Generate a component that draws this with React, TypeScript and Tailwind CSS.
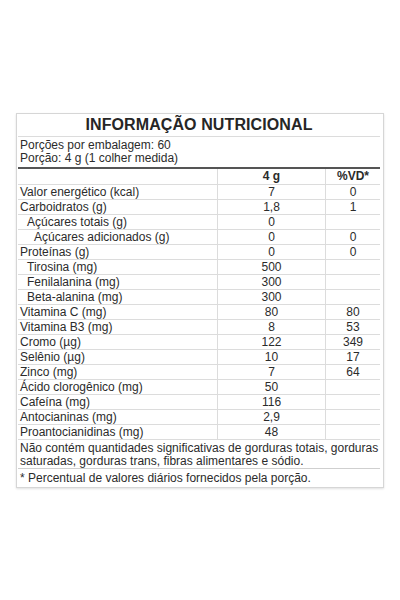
const rows: { label: string; indent?: number; qty: string; vd?: string }[] = [
  { label: 'Valor energético (kcal)', qty: '7', vd: '0' },
  { label: 'Carboidratos (g)', qty: '1,8', vd: '1' },
  { label: 'Açúcares totais (g)', indent: 1, qty: '0' },
  { label: 'Açúcares adicionados (g)', indent: 2, qty: '0', vd: '0' },
  { label: 'Proteínas (g)', qty: '0', vd: '0' },
  { label: 'Tirosina (mg)', indent: 1, qty: '500' },
  { label: 'Fenilalanina (mg)', indent: 1, qty: '300' },
  { label: 'Beta-alanina (mg)', indent: 1, qty: '300' },
  { label: 'Vitamina C (mg)', qty: '80', vd: '80' },
  { label: 'Vitamina B3 (mg)', qty: '8', vd: '53' },
  { label: 'Cromo (µg)', qty: '122', vd: '349' },
  { label: 'Selênio (µg)', qty: '10', vd: '17' },
  { label: 'Zinco (mg)', qty: '7', vd: '64' },
  { label: 'Ácido clorogênico (mg)', qty: '50' },
  { label: 'Cafeína (mg)', qty: '116' },
  { label: 'Antocianinas (mg)', qty: '2,9' },
  { label: 'Proantocianidinas (mg)', qty: '48' },
];

const indentClass = ['pl-[2px]', 'pl-[9px]', 'pl-[16px]'];

export default function App() {
  return (
    <div className="w-[400px] h-[600px] bg-white pt-[113px] font-['Liberation_Sans',Arial,sans-serif] text-[#2b2b2b]">
      <div className="ml-[16px] w-[368px] border border-[#d6d6d6] shadow-[0_1px_2px_rgba(0,0,0,0.12)] pl-[1px] pr-[3px]">
        <div className="h-[23px] border-b border-[#dcdcdc] flex items-center justify-center text-[16px] font-bold tracking-[0.1px] text-[#262626]">
          INFORMAÇÃO NUTRICIONAL
        </div>
        <div className="pt-[2px] pb-[2px] pl-[2px] text-[12px] leading-[13px] border-b-2 border-[#555]">
          <div>Porções por embalagem: 60</div>
          <div>Porção: 4 g (1 colher medida)</div>
        </div>
        <div className="grid grid-cols-[199px_108px_55px] h-[16px] border-b border-[#dcdcdc] text-[12px] leading-[15px] font-bold">
          <div />
          <div className="border-l border-[#dcdcdc] text-center">4 g</div>
          <div className="border-l border-[#dcdcdc] text-center">%VD*</div>
        </div>
        {rows.map((r) => (
          <div
            key={r.label}
            className="grid grid-cols-[199px_108px_55px] h-[15px] border-b border-[#dcdcdc] text-[12px] leading-[14px]"
          >
            <div className={indentClass[r.indent ?? 0] + ' whitespace-nowrap'}>{r.label}</div>
            <div className="border-l border-[#dcdcdc] text-center">{r.qty}</div>
            <div className="border-l border-[#dcdcdc] text-center">{r.vd ?? ''}</div>
          </div>
        ))}
        <div className="pl-[2px] pt-[2px] pb-[2px] h-[29px] border-b border-[#cfcfcf] text-[12px] leading-[13px]">
          Não contém quantidades significativas de gorduras totais, gorduras saturadas, gorduras trans, fibras alimentares e sódio.
        </div>
        <div className="pl-[2px] h-[18px] text-[12px] leading-[18px]">
          * Percentual de valores diários fornecidos pela porção.
        </div>
      </div>
    </div>
  );
}
